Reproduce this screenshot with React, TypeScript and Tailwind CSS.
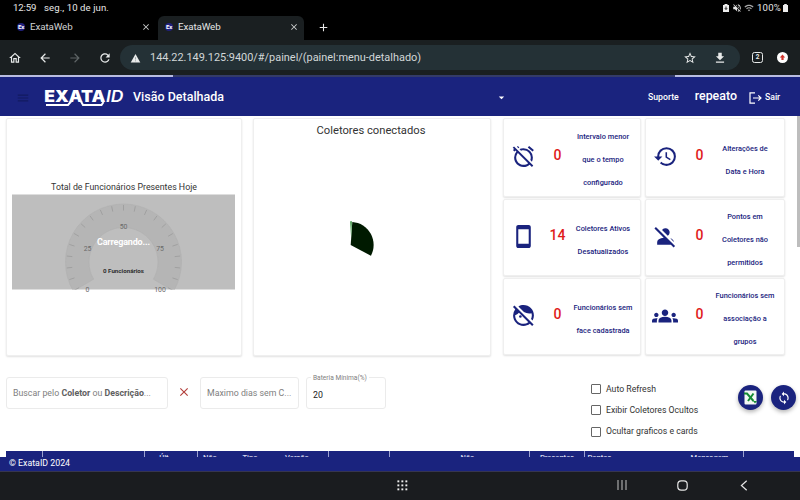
import React from "react";
import {
  MdAlarmOff,
  MdHistory,
  MdStayCurrentPortrait,
  MdPersonOff,
  MdFaceRetouchingOff,
  MdGroups,
  MdSync,
  MdClose,
  MdOutlineHome,
  MdArrowBack,
  MdArrowForward,
  MdRefresh,
  MdStarBorder,
  MdDownload,
  MdMenu,
  MdArrowDropDown,
  MdAdd,
  MdVolumeOff,
  MdWifi,
} from "react-icons/md";

function Favicon() {
  return (
    <span className="flex h-2 w-2 items-center justify-center rounded-full bg-[#20207c] text-[6px] leading-none font-bold tracking-[-0.3px] text-white">
      Ex
    </span>
  );
}

function StatusBar() {
  return (
    <div className="flex h-4 items-center bg-black pr-3 pb-px pl-[13px] text-[9.6px] leading-none text-[#e6e6e6]">
      <span className="w-[31px] tracking-[-0.15px]">12:59</span>
      <span className="tracking-[0.08px]">seg., 10 de jun.</span>
      <div className="ml-auto flex items-center">
        <svg className="mr-[3px] h-2 w-[6px]" viewBox="0 0 6 8">
          <path d="M1.5 0h3v1H6v7H0V1h1.5z" fill="#eee" />
          <path d="M3 2.5v3M1.8 4.2 3 5.4l1.2-1.2" stroke="#111" fill="none" strokeWidth=".9" />
        </svg>
        <MdVolumeOff className="mr-[2px] h-[10px] w-[10px]" />
        <MdWifi className="mr-[3px] h-[10px] w-[10px] text-[#aaa]" />
        <span className="tracking-[0.2px]">100%</span>
        <svg className="ml-[2px] h-2 w-[5px]" viewBox="0 0 5 8">
          <path d="M1.2 0h2.6v1H5v7H0V1h1.2z" fill="#eee" />
        </svg>
      </div>
    </div>
  );
}

function Tabs() {
  return (
    <div className="flex h-6 items-center bg-black text-[9.8px] text-[#d0d2d2]">
      <div className="flex h-full w-[158px] items-center pr-[7px] pb-[2px] pl-[17px]">
        <Favicon />
        <span className="ml-[5px] tracking-[-0.12px]">ExataWeb</span>
        <MdClose className="ml-auto h-[10px] w-[10px]" />
      </div>
      <div className="flex h-full w-[146px] items-center rounded-t-[6px] bg-[#1a1f21] pr-[5px] pb-[2px] pl-[7px]">
        <Favicon />
        <span className="ml-[5px] tracking-[-0.12px] text-[#e3e5e5]">ExataWeb</span>
        <MdClose className="ml-auto h-[10px] w-[10px]" />
      </div>
      <MdAdd className="mb-[2px] ml-[13px] h-[13px] w-[13px] text-[#e8e8e8]" />
    </div>
  );
}

function WarningTriangle() {
  return (
    <svg className="mt-px h-[9px] w-[11px]" viewBox="0 0 11 9">
      <path d="M5.5 0 10.3 8.5H.7z" fill="#e8eaea" />
      <path d="M5.5 3.2v2.3M5.5 6.3v1" stroke="#8b9598" strokeWidth=".8" />
    </svg>
  );
}

function AddressBar() {
  return (
    <div className="flex h-[35px] items-center bg-[#1a1f21] pl-[8px] text-[#e8eaea]">
      <MdOutlineHome className="h-[14px] w-[14px]" />
      <MdArrowBack className="ml-[16px] h-[14px] w-[14px]" />
      <MdArrowForward className="ml-4 h-[14px] w-[14px] text-[#5f6567]" />
      <MdRefresh className="ml-4 h-[14px] w-[14px]" />
      <div className="ml-2 flex h-[25px] w-[620px] items-center rounded-full bg-[#243136] pl-[10px]">
        <WarningTriangle />
        <span className="mt-[2px] ml-[9px] text-[10.93px] text-[#d2d7d8]">
          144.22.149.125:9400/#/painel/(painel:menu-detalhado)
        </span>
        <MdStarBorder className="ml-auto h-[14px] w-[14px]" />
        <MdDownload className="mr-[13px] ml-4 h-[14px] w-[14px]" />
      </div>
      <span className="ml-[12px] flex h-[11px] w-[11px] items-center justify-center rounded-[2.5px] border-[1.2px] border-[#e8eaea] text-[6.5px] leading-none font-bold">
        2
      </span>
      <svg className="ml-[14px] h-[11px] w-[11px]" viewBox="0 0 11 11">
        <circle cx="5.5" cy="5.5" r="5.5" fill="#fff" />
        <path d="M5.5 2.6 8.2 5.5H6.6v2.6H4.4V5.5H2.8z" fill="#d1332b" />
      </svg>
    </div>
  );
}

function Header() {
  return (
    <header className="flex h-[41px] flex-col bg-[#1a237e] text-white">
      <div className="flex h-[2px] justify-between bg-[#343b68]">
        <div className="w-[173px] bg-[#b9bce0]" />
        <div className="w-[125px] bg-[#b9bce0]" />
      </div>
      <div className="flex flex-1 items-center pb-px pt-[3px] pl-4">
        <MdMenu className="h-[14px] w-[14px] text-[#121b60]" />
        <svg className="ml-[14px] h-[20px] w-[80px]" viewBox="0 0 80 20">
          <text x="0.3" y="14.2" textLength="61" lengthAdjust="spacingAndGlyphs" fontFamily="Inter" fontWeight="900" fontSize="16" fill="#fff">
            EXATA
          </text>
          <text x="62" y="14" textLength="17.5" lengthAdjust="spacingAndGlyphs" fontFamily="Inter" fontWeight="600" fontStyle="italic" fontSize="16" fill="#fff">
            ID
          </text>
          <path d="M2 17h22l3-3.5M37 13.5l2 3.5h18.5l2-3" stroke="#fff" strokeWidth="2" fill="none" />
        </svg>
        <h1 className="ml-[9px] w-[360px] text-[12.5px] font-medium">Visão Detalhada</h1>
        <MdArrowDropDown className="ml-[2px] h-[13px] w-[13px]" />
        <span className="ml-[140px] text-[8.7px] font-medium">Suporte</span>
        <span className="mb-[3px] ml-[16px] text-[12.4px] font-medium">repeato</span>
        <svg className="ml-[12px] h-3 w-[13px]" viewBox="0 0 13 12" fill="none" stroke="#fff" strokeWidth="1.2">
          <path d="M6 .8H1v10.4h5M4 6h8M9.3 3.4 12 6 9.3 8.6" />
        </svg>
        <span className="ml-[3px] text-[8.7px] font-medium">Sair</span>
      </div>
    </header>
  );
}

const cardClass = "rounded-[2px] border border-[#efefef] bg-white shadow-[0_1px_2px_rgba(0,0,0,0.12)]";

function point(r: number, deg: number) {
  const a = (deg * Math.PI) / 180;
  return [111.5 + r * Math.sin(a), 68 - r * Math.cos(a)] as const;
}

function Gauge() {
  const [x1, y1] = point(58, -120);
  const [x2, y2] = point(58, 120);
  const [x3, y3] = point(34.5, 120);
  const [x4, y4] = point(34.5, -120);
  const ticks = Array.from({ length: 21 }, (_, i) => -120 + i * 12);
  return (
    <svg className="mr-px h-[100px] w-[223px]" viewBox="0 0 223 100" fontFamily="Roboto" textAnchor="middle">
      <rect y="0.5" width="223" height="95" fill="#bebebe" />
      <clipPath id="gauge-clip">
        <rect width="223" height="95.5" />
      </clipPath>
      <g clipPath="url(#gauge-clip)">
        <path
          d={`M${x1} ${y1}A58 58 0 1 1 ${x2} ${y2}L${x3} ${y3}A34.5 34.5 0 1 0 ${x4} ${y4}Z`}
          fill="#b5b5b5"
          stroke="#b0b0b0"
          strokeWidth=".6"
        />
        {ticks.map((t) => {
          const [ax, ay] = point(57, t);
          const [bx, by] = point(51.5, t);
          return <path key={t} d={`M${ax} ${ay}L${bx} ${by}`} stroke="#9a9a9a" strokeWidth=".8" />;
        })}
      </g>
      <g fontSize="6.9" fill="#6a6a6a">
        <text x="75.5" y="56.5">25</text>
        <text x="111.5" y="35">50</text>
        <text x="148" y="56.5">75</text>
        <text x="75.5" y="98">0</text>
        <text x="148" y="98">100</text>
      </g>
      <text x="111.5" y="50.8" fontSize="9" fontWeight="700" fill="#fff" textLength="53">
        Carregando...
      </text>
      <text x="111.5" y="78.8" fontSize="6.2" fontWeight="700" fill="#2e2e2e" textLength="41">
        0 Funcionários
      </text>
    </svg>
  );
}

function Pie() {
  return (
    <svg className="mt-[80px] ml-[94px] h-[40px] w-[30px]" viewBox="0 0 30 40">
      <path d="M2.7 26 4.3 3A23 23 0 0 1 22.9 36.8Z" fill="#001a00" />
      <path d="M2.1 2.3h1.9L3.1 19z" fill="#4e9f55" />
    </svg>
  );
}

type Metric = { icon: React.ReactNode; value: number; lines: string[] };

const ic = "h-[25px] w-[25px]";
const metrics: Metric[] = [
  { icon: <MdAlarmOff className={ic} />, value: 0, lines: ["Intervalo menor", "que o tempo", "configurado"] },
  { icon: <MdHistory className={ic} />, value: 0, lines: ["Alterações de", "Data e Hora"] },
  { icon: <MdStayCurrentPortrait className={ic} />, value: 14, lines: ["Coletores Ativos", "Desatualizados"] },
  { icon: <MdPersonOff className={ic} />, value: 0, lines: ["Pontos em", "Coletores não", "permitidos"] },
  { icon: <MdFaceRetouchingOff className={ic} />, value: 0, lines: ["Funcionários sem", "face cadastrada"] },
  { icon: <MdGroups className="h-[26px] w-[26px]" />, value: 0, lines: ["Funcionários sem", "associação a", "grupos"] },
];

function MetricCard({ icon, value, lines }: Metric) {
  return (
    <div className={`flex items-center text-[#1a237e] ${cardClass}`}>
      <div className="mb-[2px] flex w-[38px] justify-center">{icon}</div>
      <div className="mb-[4px] ml-px w-[29px] text-center text-[14px] font-medium text-[#e01b1b]">{value}</div>
      <div className="mt-[6px] w-[62px] text-center text-[7.4px] leading-[22.9px] font-medium whitespace-nowrap">
        {lines.map((l) => (
          <div key={l}>{l}</div>
        ))}
      </div>
    </div>
  );
}

function Dashboard() {
  return (
    <section className="flex h-[238px] shrink-0 pl-[6px]">
      <div className={`flex w-[236px] flex-col items-center pt-[60.5px] ${cardClass}`}>
        <h2 className="h-[14px] text-[8.8px] leading-[14px] text-[#333]">Total de Funcionários Presentes Hoje</h2>
        <Gauge />
      </div>
      <div className={`ml-[11px] w-[238px] ${cardClass}`}>
        <h2 className="pt-[4px] pr-[2px] text-center text-[11.2px] leading-[16px] text-[#333]">Coletores conectados</h2>
        <Pie />
      </div>
      <div className="ml-[12px] grid w-[282px] grid-cols-[138px_140px] grid-rows-[79px_77px_77px] gap-x-1 gap-y-[2px]">
        {metrics.map((m, i) => (
          <MetricCard key={i} {...m} />
        ))}
      </div>
    </section>
  );
}

function Filters() {
  const field = "flex h-8 items-center rounded-[3px] border border-[#ebebeb] px-[6px] text-[8.8px] text-[#808080]";
  return (
    <section className="flex h-[95px] shrink-0 items-start pt-[21px] pl-[6px]">
      <div className={`w-[162px] pt-[2px] whitespace-pre ${field}`}>
        Buscar pelo <b className="font-bold text-[#606060]">Coletor</b> ou <b className="font-bold text-[#606060]">Descrição</b>...
      </div>
      <MdClose className="mt-[8px] ml-[9px] h-[14px] w-[14px] text-[#b3403c]" />
      <div className={`ml-[9px] w-[99px] pt-[2px] whitespace-nowrap ${field}`}>Maximo dias sem C...</div>
      <div className={`relative ml-[7px] w-[80px] ${field}`}>
        <span className="absolute top-[-4px] left-[4px] bg-white px-[2px] text-[6.6px] leading-[9px] whitespace-nowrap">
          Bateria Mínima(%)
        </span>
        <span className="mt-[5px] text-[#222]">20</span>
      </div>
      <div className="mt-[6px] ml-[205px] flex flex-col gap-[10.3px] text-[8.7px] leading-[10px] text-[#333]">
        {["Auto Refresh", "Exibir Coletores Ocultos", "Ocultar graficos e cards"].map((t) => (
          <label key={t} className="flex items-center whitespace-nowrap">
            <span className="mt-px mr-[5px] h-[10px] w-[10px] rounded-[1px] border border-[#666]" />
            {t}
          </label>
        ))}
      </div>
      <div className="mt-[8px] mr-[4px] ml-auto flex gap-2">
        <button className="flex h-[25px] w-[25px] items-center justify-center rounded-full bg-[#1a237e] shadow-[0_2px_4px_rgba(0,0,0,0.3)]">
          <svg className="h-[15px] w-[15px]" viewBox="0 0 15 15">
            <rect x="1.5" y="0.5" width="12" height="14" rx="1" fill="#f4f8f4" />
            <path d="M1 3.5h3l6.5 7.5M10.5 3.5 5 11" stroke="#168a35" strokeWidth="2" fill="none" />
            <path d="M10 11h4l-2 2.5z" fill="#168a35" />
          </svg>
        </button>
        <button className="flex h-[25px] w-[25px] items-center justify-center rounded-full bg-[#1a237e] text-white shadow-[0_2px_4px_rgba(0,0,0,0.3)]">
          <MdSync className="h-[14px] w-[14px]" />
        </button>
      </div>
    </section>
  );
}

const columns = ["", "", "", "Últ.", "Não", "Tipo", "Versão", "", "Não", "Presentes", "Pontos", "", "Mensagem", ""];

function TableHead() {
  return (
    <div className="mx-[6px] grid h-[7px] shrink-0 grid-cols-[37px_51px_51px_53px_36px_44px_51px_61px_140px_55px_39px_66px_54px_1fr] overflow-hidden bg-[#1a237e] text-center text-[7.6px] leading-[9px] font-medium text-[#d5d7ee]">
      {columns.map((c, i) => (
        <div
          key={i}
          className={`h-[6px] pt-[2px] whitespace-nowrap ${
            [0, 2, 3, 6, 7, 8, 9, 12].includes(i) ? "border-r border-[#9da2d0]" : ""
          } ${[3, 4, 5, 6].includes(i) ? "pr-[12px]" : ""} ${i === 10 ? "pr-[10px]" : ""} ${i === 8 ? "pl-[16px]" : ""} ${
            i === 12 ? "pr-[14px]" : ""
          }`}
        >
          {c}
        </div>
      ))}
    </div>
  );
}

function SystemNav() {
  return (
    <nav className="flex h-[29px] items-center border-t border-[#36354f] bg-[#1a1c1f] pb-[2px]">
      <svg className="ml-[397px] h-[11px] w-[11px]" viewBox="0 0 11 11" fill="#eee">
        {[0, 4, 8].map((x) => [0, 4, 8].map((y) => <rect key={`${x}-${y}`} x={x + 0.4} y={y + 0.4} width="1.9" height="1.9" />))}
      </svg>
      <svg className="ml-[209px] h-[10px] w-[10px]" viewBox="0 0 10 10" stroke="#b5b5b5" strokeWidth="1.1">
        <path d="M1 0v10M5 0v10M9 0v10" />
      </svg>
      <svg className="ml-[50px] h-[11px] w-[11px]" viewBox="0 0 11 11">
        <rect x=".8" y=".8" width="9.4" height="9.4" rx="3.4" fill="none" stroke="#e5e5e5" strokeWidth="1.2" />
      </svg>
      <svg className="ml-[52px] h-[11px] w-[8px]" viewBox="0 0 8 11">
        <path d="M6.7.7 1.4 5.5l5.3 4.8" fill="none" stroke="#e5e5e5" strokeWidth="1.2" />
      </svg>
    </nav>
  );
}

export default function App() {
  return (
    <div className="flex h-[500px] w-[800px] flex-col overflow-hidden bg-white font-['Roboto',sans-serif]">
      <StatusBar />
      <Tabs />
      <AddressBar />
      <Header />
      <main className="relative flex h-[341px] flex-col overflow-hidden pt-[2px]">
        <Dashboard />
        <Filters />
        <TableHead />
        <div className="absolute top-0 right-0 h-[131px] w-[3px] bg-[#bdbdbd]" />
      </main>
      <footer className="flex h-[14px] items-center bg-[#1a237e] pb-px pl-[9px] text-[8.8px] leading-none text-white">© ExataID 2024</footer>
      <SystemNav />
    </div>
  );
}
